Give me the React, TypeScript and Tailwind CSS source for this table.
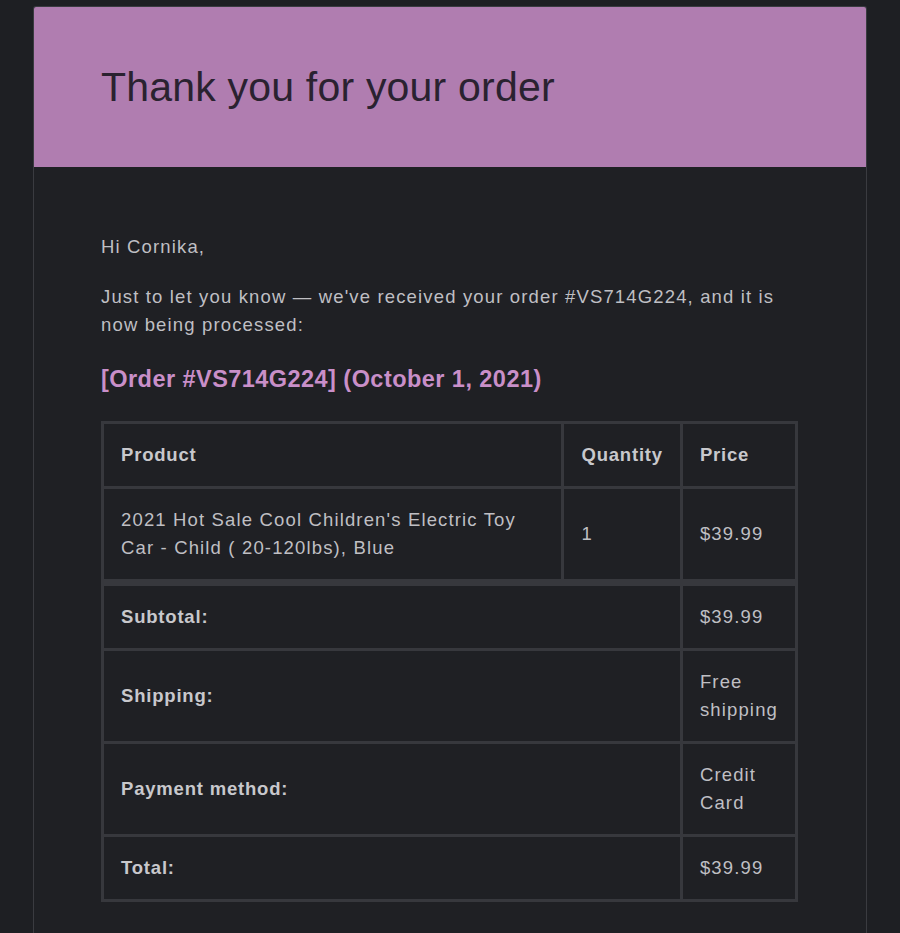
export default function App() {
  const font = { fontFamily: '"Liberation Sans", Arial, sans-serif' };
  const cell = "border-[3px] border-[#37383d] px-[17px] py-[17px] align-middle";
  const label = `${cell} font-bold tracking-[0.8px] text-[#c8c8cc]`;

  return (
    <div className="min-h-screen bg-[#1e1f23] px-[33px] pt-[6px]" style={font}>
      <div className="overflow-hidden rounded-t-[3px] border border-b-0 border-[#3a3b40] bg-[#1f2024]">
        {/* Header */}
        <div className="flex h-[160px] items-center bg-[#b07db0] px-[67px]">
          <h1 className="text-[41px] font-light leading-none tracking-[0.2px] text-[#2a2230]">
            Thank you for your order
          </h1>
        </div>

        {/* Body */}
        <div className="px-[67px] pt-[66px] pb-[40px] text-[18.5px] leading-[28px] tracking-[1.15px] text-[#bfbfc3]">
          <p>Hi Cornika,</p>
          <p className="mt-[22px]">
            Just to let you know — we've received your order #VS714G224, and it is now being processed:
          </p>
          <h2 className="mt-[26px] text-[23.5px] font-bold leading-[28px] tracking-[0.45px] text-[#c98fc9]">
            [Order #VS714G224] (October 1, 2021)
          </h2>

          <table className="mt-[28px] w-[697px] border-collapse border-[3px] border-[#37383d] text-left">
            <thead>
              <tr>
                <th className={`${label} w-[462px]`}>Product</th>
                <th className={`${label} w-[118px]`}>Quantity</th>
                <th className={label}>Price</th>
              </tr>
            </thead>
            <tbody>
              <tr>
                <td className={cell}>2021 Hot Sale Cool Children's Electric Toy Car - Child ( 20-120lbs), Blue</td>
                <td className={cell}>1</td>
                <td className={cell}>$39.99</td>
              </tr>
            </tbody>
            <tfoot>
              <tr>
                <th colSpan={2} className={`${label} border-t-[7px]`}>
                  Subtotal:
                </th>
                <td className={`${cell} border-t-[7px]`}>$39.99</td>
              </tr>
              <tr>
                <th colSpan={2} className={label}>
                  Shipping:
                </th>
                <td className={cell}>Free shipping</td>
              </tr>
              <tr>
                <th colSpan={2} className={label}>
                  Payment method:
                </th>
                <td className={cell}>Credit Card</td>
              </tr>
              <tr>
                <th colSpan={2} className={label}>
                  Total:
                </th>
                <td className={cell}>$39.99</td>
              </tr>
            </tfoot>
          </table>
        </div>
      </div>
    </div>
  );
}
